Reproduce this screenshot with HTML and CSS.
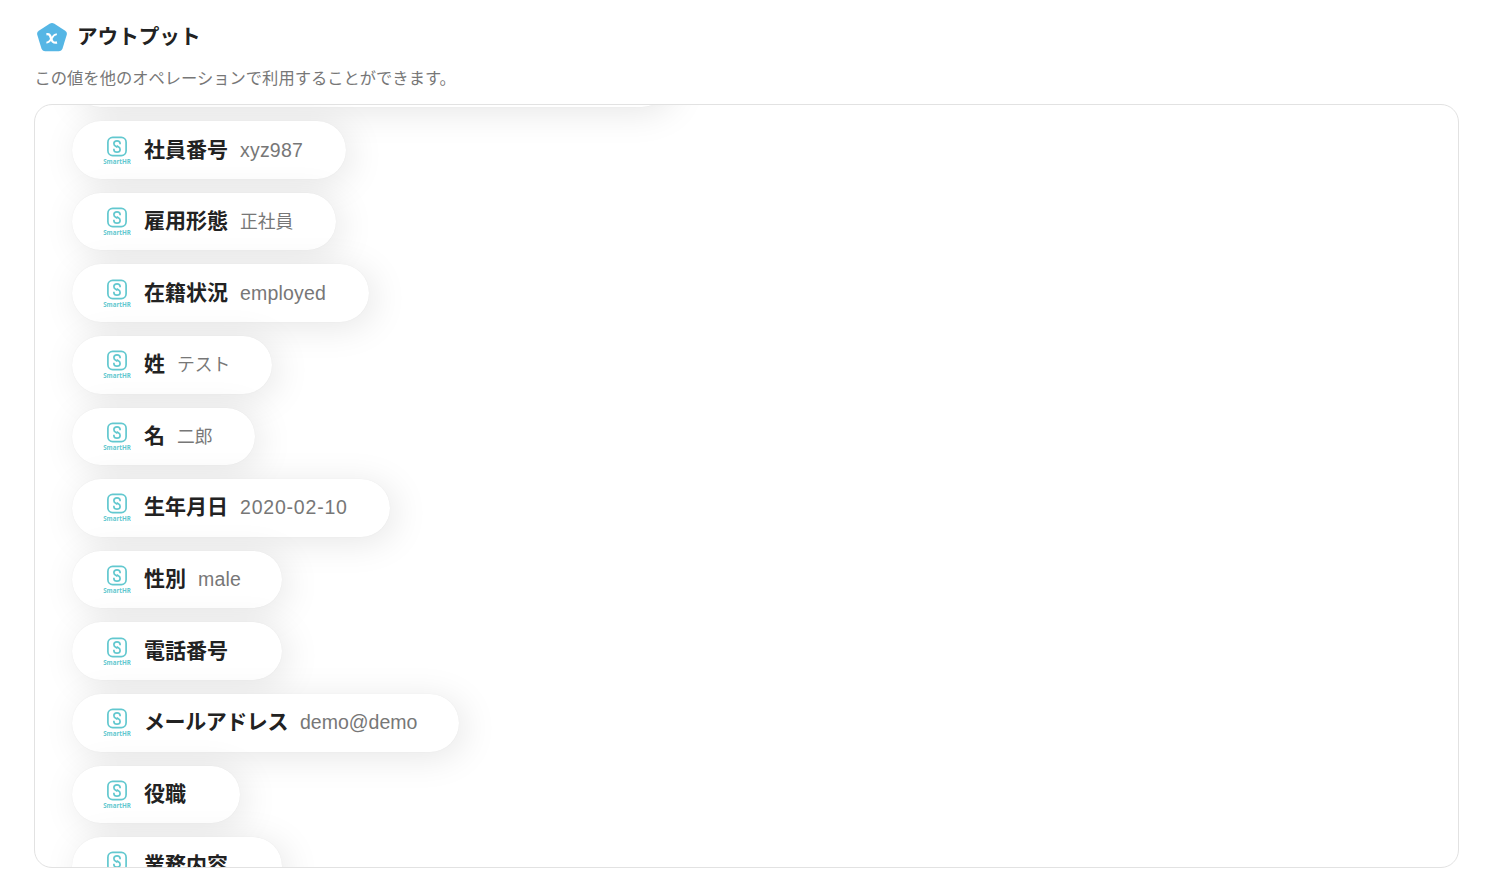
FILE: index.html
```
<!DOCTYPE html>
<html lang="ja">
<head>
<meta charset="utf-8">
<title>アウトプット</title>
<link rel="stylesheet" href="styles.css">
</head>
<body>
<svg class="defs" aria-hidden="true">
  <symbol id="smarthr" viewBox="0 0 28 29">
    <rect x="4.900" y="1.400" width="18.200" height="18.200" rx="4.800" fill="none" stroke="#62c8cf" stroke-width="1.700"/>
    <path d="M17.100 8.200V7.600a3.100 2.700 0 0 0-6.200 0c0 1.500.5 2 1.400 2.500l2 1.100M10.900 12.800v.6a3.100 2.700 0 0 0 6.200 0c0-1.500-.5-2-1.400-2.500l-2-1.100" fill="none" stroke="#62c8cf" stroke-width="1.700"/>
    <text x="0.200" y="27.700" textLength="27.600" lengthAdjust="spacingAndGlyphs" class="logo-text">SmartHR</text>
  </symbol>
</svg>
<header class="head">
  <svg class="badge" viewBox="0 0 30 29">
    <path d="M12.600 .8q2.400-1.400 4.800 0l10.800 7q2.300 1.600 1.500 4.200l-4.100 13.200q-1 3-3.900 3H8.300q-2.900 0-3.900-3L.3 12Q-.5 9.400 1.800 7.800z" fill="#55b6e5"/>
    <path d="M9.400 11.300c2.700-.6 3.500.3 4.600 3.900 1.100 3.900 2.300 5.100 6 4.300" fill="none" stroke="#fff" stroke-width="2.400"/>
    <path d="M19.900 11.400c-2-.3-3.400.9-5.200 3.900-1.900 3.200-3.100 4.500-5.300 4.100" fill="none" stroke="#fff" stroke-width="1.900"/>
  </svg>
  <h1 class="title">アウトプット</h1>
</header>
<p class="desc">この値を他のオペレーションで利用することができます。</p>
<main class="panel">
  <div class="list">
    <div class="pill" style="width:598px"></div>
    <div class="pill" style="width:274px"><svg class="logo"><use href="#smarthr"/></svg><b class="label">社員番号</b><span class="value">xyz987</span></div>
    <div class="pill" style="width:264px"><svg class="logo"><use href="#smarthr"/></svg><b class="label">雇用形態</b><span class="value ja">正社員</span></div>
    <div class="pill" style="width:297px"><svg class="logo"><use href="#smarthr"/></svg><b class="label">在籍状況</b><span class="value">employed</span></div>
    <div class="pill" style="width:200px"><svg class="logo"><use href="#smarthr"/></svg><b class="label">姓</b><span class="value ja">テスト</span></div>
    <div class="pill" style="width:183px"><svg class="logo"><use href="#smarthr"/></svg><b class="label">名</b><span class="value ja">二郎</span></div>
    <div class="pill" style="width:318px"><svg class="logo"><use href="#smarthr"/></svg><b class="label">生年月日</b><span class="value date">2020-02-10</span></div>
    <div class="pill" style="width:210px"><svg class="logo"><use href="#smarthr"/></svg><b class="label">性別</b><span class="value">male</span></div>
    <div class="pill" style="width:210px"><svg class="logo"><use href="#smarthr"/></svg><b class="label">電話番号</b></div>
    <div class="pill" style="width:387px"><svg class="logo"><use href="#smarthr"/></svg><b class="label kana">メールアドレス</b><span class="value mail">demo@demo</span></div>
    <div class="pill" style="width:168px"><svg class="logo"><use href="#smarthr"/></svg><b class="label">役職</b></div>
    <div class="pill" style="width:210px"><svg class="logo"><use href="#smarthr"/></svg><b class="label">業務内容</b></div>
  </div>
</main>
</body>
</html>
```
FILE: styles.css
```
* { box-sizing: border-box; }
body {
  margin: 0;
  height: 896px;
  padding: 22px 35px 28px 34px;
  display: flex;
  flex-direction: column;
  overflow: hidden;
  background: #fff;
  color: #222;
  font-family: "Liberation Sans", "Noto Sans CJK JP", sans-serif;
}
.defs { display: none; }
.head { display: flex; height: 30px; padding-left: 3px; gap: 10px; }
.badge { width: 30px; height: 29px; margin-top: 1px; }
.title {
  margin: 0;
  font: bold 20.6px/26px "Noto Sans CJK JP", sans-serif;
}
.desc {
  margin: 12px 0 0;
  height: 40px;
  padding-left: .5px;
  color: #777;
  font: 16.3px/26px "Noto Sans CJK JP", sans-serif;
}
.panel {
  height: 764px;
  border: 1px solid #e2e2e2;
  border-radius: 18px;
  overflow: hidden;
}
.list {
  display: flex;
  flex-direction: column;
  align-items: flex-start;
  gap: 14px;
  margin-top: -55.4px;
  padding-left: 37px;
}
.pill {
  display: flex;
  flex: none;
  align-items: center;
  height: 57.6px;
  padding-left: 31px;
  border-radius: 29px;
  background: #fff;
  box-shadow: 5px 5px 36px rgba(0, 0, 0, .1), 0 0 1px rgba(0, 0, 0, .08);
  white-space: nowrap;
}
.logo { flex: none; width: 28px; height: 29px; margin-right: 13px; }
.logo-text { font: bold 6.5px "Open Sans", sans-serif; fill: #62c8cf; }
.label {
  margin-right: 12px;
  padding-bottom: 5px;
  font: bold 21px/30px "Noto Sans CJK JP", sans-serif;
}
.kana { letter-spacing: -.43px; }
.value { color: #777; font-size: 19.5px; letter-spacing: .2px; }
.date { letter-spacing: .8px; }
.mail { letter-spacing: 0; }
.ja { padding-bottom: 3px; font: 17.8px/30px "Noto Sans CJK JP", sans-serif; letter-spacing: 0; }
```
